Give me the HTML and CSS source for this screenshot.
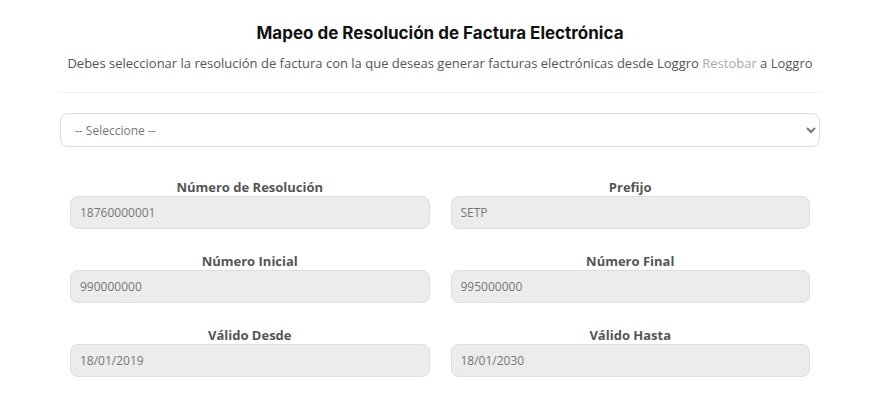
FILE: index.html
```html
<!DOCTYPE html>
<html lang="es">
<head>
    <meta charset="UTF-8">
    <meta name="viewport" content="width=device-width, initial-scale=1.0">
    <title>Mapeo de Resolución de Factura Electrónica</title>
    <link rel="stylesheet" href="styles.css">
</head>
<body>
    <div class="mapeo">
        <h1 class="mapeo-title">Mapeo de Resolución de Factura Electrónica</h1>
        <p class="mapeo-desc">Debes seleccionar la resolución de factura con la que deseas generar facturas electrónicas desde Loggro <span class="faded">Restobar</span> a Loggro</p>

        <hr class="divider">

        <select class="resolucion-select">
            <option>-- Seleccione --</option>
        </select>

        <div class="fields">
            <div class="field">
                <label>Número de Resolución</label>
                <input type="text" value="18760000001" disabled>
            </div>
            <div class="field">
                <label>Prefijo</label>
                <input type="text" value="SETP" disabled>
            </div>
            <div class="field">
                <label>Número Inicial</label>
                <input type="text" value="990000000" disabled>
            </div>
            <div class="field">
                <label>Número Final</label>
                <input type="text" value="995000000" disabled>
            </div>
            <div class="field">
                <label>Válido Desde</label>
                <input type="text" value="18/01/2019" disabled>
            </div>
            <div class="field">
                <label>Válido Hasta</label>
                <input type="text" value="18/01/2030" disabled>
            </div>
        </div>
    </div>
</body>
</html>
```

FILE: styles.css
```css
body {
    margin: 0;
    background-color: #fff;
    font-family: 'Open Sans', sans-serif;
    color: #555;
}

.mapeo {
    width: 760px;
    margin-left: 60px;
    padding-top: 21px;
}

.mapeo-title {
    font-family: 'Inter', sans-serif;
    font-size: 17px;
    font-weight: 700;
    color: #111;
    text-align: center;
    margin: 0;
    line-height: 24px;
}

.mapeo-desc {
    font-size: 13px;
    text-align: center;
    margin: 8px 0 0;
    line-height: 20px;
    color: #555;
}

.mapeo-desc .faded {
    color: #aaa;
}

.divider {
    border: none;
    border-top: 1px solid #eee;
    margin: 19px 0 20px;
}

.resolucion-select {
    display: block;
    width: 100%;
    height: 34px;
    padding: 0 10px;
    border: 1px solid #ddd;
    border-radius: 8px;
    background-color: #fff;
    font-family: 'Open Sans', sans-serif;
    font-size: 12px;
    color: #777;
}

.fields {
    display: grid;
    grid-template-columns: 1fr 1fr;
    column-gap: 21px;
    row-gap: 24px;
    padding: 32px 10px 0;
}

.field label {
    display: block;
    text-align: center;
    font-size: 13px;
    font-weight: 700;
    color: #555;
    line-height: 16px;
    margin-bottom: 1px;
}

.field input {
    display: block;
    width: 100%;
    box-sizing: border-box;
    height: 33px;
    padding: 0 9px;
    border: 1px solid #ddd;
    border-radius: 8px;
    background-color: #ececec;
    font-family: 'Open Sans', sans-serif;
    font-size: 12px;
    color: #777;
}
```
